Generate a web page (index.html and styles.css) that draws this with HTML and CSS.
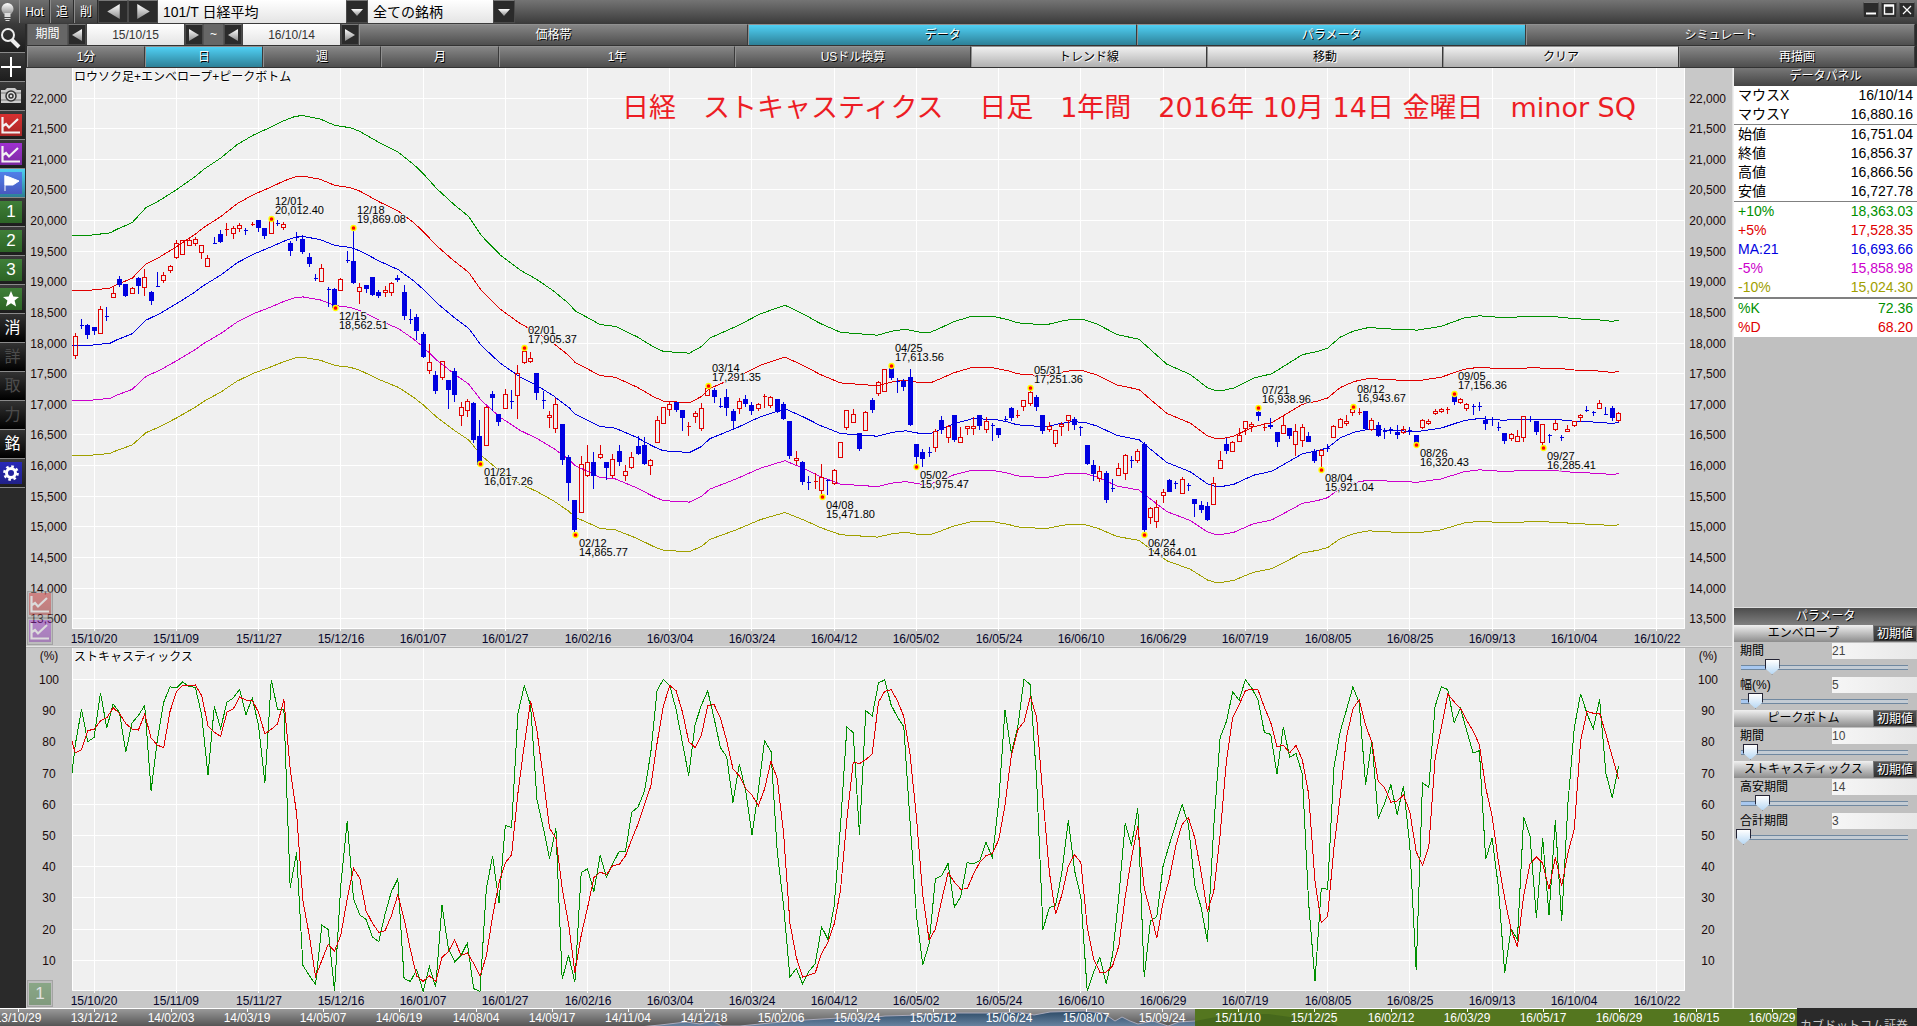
FILE: index.html
```html
<!DOCTYPE html>
<html lang="ja">
<head>
<meta charset="utf-8">
<title>日経平均 チャート</title>
<link rel="stylesheet" href="styles.css">
</head>
<body>
<svg class="defs" aria-hidden="true">
  <linearGradient id="silver" x1="0" y1="0" x2="0" y2="1"><stop offset="0" stop-color="#fff"/><stop offset="1" stop-color="#8a8a8a"/></linearGradient>
  <linearGradient id="night" x1="0" y1="0" x2="0" y2="1"><stop offset="0" stop-color="#2c4a66"/><stop offset="1" stop-color="#6b86a3"/></linearGradient>
  <symbol id="left" viewBox="0 0 12 12"><path d="M11 0v12L1 6z" fill="url(#silver)"/></symbol>
  <symbol id="right" viewBox="0 0 12 12"><path d="M1 0v12L11 6z" fill="url(#silver)"/></symbol>
  <symbol id="down" viewBox="0 0 12 8"><path d="M0 1h12L6 8z" fill="url(#silver)"/></symbol>
  <symbol id="graph" viewBox="0 0 22 22"><path d="M2.500 3v15.500H20M3 12l3-2 3 3.500L18 5" fill="none" stroke="#f2f2f2" stroke-width="2.200"/></symbol>
</svg>
<div class="app">
  <header class="titlebar">
    <svg class="bulb" viewBox="0 0 18 23" aria-hidden="true"><circle cx="7" cy="9" r="6" fill="url(#silver)"/><path d="M4 13h6v4H4zM4 18h6v1H4zM5 20h4v1H5z" fill="#ddd"/></svg>
    <button class="grey hot">Hot</button><button class="grey mini">追</button><button class="grey mini">削</button>
    <button class="dark nav" aria-label="前へ"><svg width="15" height="15"><use href="#left"/></svg></button>
    <button class="dark nav" aria-label="次へ"><svg width="15" height="15"><use href="#right"/></svg></button>
    <label class="combo code"><select aria-label="銘柄"><option>101/T 日経平均</option></select><span class="dark"><svg width="12" height="8"><use href="#down"/></svg></span></label>
    <label class="combo list"><select aria-label="リスト"><option>全ての銘柄</option></select><span class="dark"><svg width="12" height="8"><use href="#down"/></svg></span></label>
    <div class="window">
      <button class="dark" aria-label="最小化"><svg width="14" height="14"><path d="M2 10.500h10" stroke="#fff" stroke-width="2"/></svg></button>
      <button class="dark" aria-label="最大化"><svg width="14" height="14"><path d="M2.500 2h9v9h-9zM2 3h10" fill="none" stroke="#fff" stroke-width="1.400"/></svg></button>
      <button class="dark" aria-label="閉じる"><svg width="14" height="14"><path d="M3 3l8 8M11 3l-8 8" stroke="#fff" stroke-width="1.200"/></svg></button>
    </div>
  </header>
  <div class="body">
    <nav class="tools">
      <button aria-label="拡大"><svg width="22" height="24" fill="none" stroke="#eee"><circle cx="8" cy="9" r="6" stroke-width="2"/><path d="M12 14l7 7" stroke-width="4"/></svg></button>
      <button aria-label="十字線"><svg width="22" height="22"><path d="M1 11h20M11 1v20" stroke="#fff" stroke-width="2"/></svg></button>
      <button aria-label="撮影"><svg width="22" height="20"><path d="M1 4h4l2-2h8l2 2h4v13H1z" fill="#ccc"/><path d="M1 7h20M1 14h20" stroke="#777"/><circle cx="11" cy="10" r="5" fill="#ddd" stroke="#333" stroke-width="1.500"/><circle cx="11" cy="10" r="2" fill="none" stroke="#333" stroke-width="1.500"/></svg></button>
      <button aria-label="チャート1"><svg class="tile red" width="22" height="22"><use href="#graph"/></svg></button>
      <button aria-label="チャート2"><svg class="tile purple" width="22" height="22"><use href="#graph"/></svg></button>
      <button class="on" aria-label="旗"><svg class="tile blue" width="22" height="22"><path d="M5 3v16M5 4l4 1 10 4-6 4H5z" fill="#fff" stroke="#fff"/></svg></button>
      <button><span class="tile green">1</span></button>
      <button><span class="tile green">2</span></button>
      <button><span class="tile green">3</span></button>
      <button aria-label="お気に入り"><svg class="tile green" width="22" height="22"><path d="M11 3l2.300 5.500 5.700.4-4.400 3.700 1.500 5.900-5.100-3.300-5.100 3.300 1.500-5.900L3 8.900l5.700-.4z" fill="#fff"/></svg></button>
      <button class="word">消</button>
      <button class="word" disabled>詳</button>
      <button class="word" disabled>取</button>
      <button class="word" disabled>力</button>
      <button class="word">銘</button>
      <button aria-label="設定"><svg class="tile navy" width="22" height="22"><circle cx="11" cy="11" r="4.500" fill="none" stroke="#fff" stroke-width="3"/><circle cx="11" cy="11" r="6.600" fill="none" stroke="#fff" stroke-width="2.500" stroke-dasharray="2.600 2.584"/></svg></button>
    </nav>
    <main class="main">
      <div class="bar range">
        <span class="tag">期間</span>
        <button class="dark step" aria-label="開始日を戻す"><svg width="12" height="12"><use href="#left"/></svg></button>
        <input class="day" value="15/10/15" aria-label="開始日">
        <button class="dark step" aria-label="開始日を進める"><svg width="12" height="12"><use href="#right"/></svg></button>
        <span class="tag tilde">~</span>
        <button class="dark step" aria-label="終了日を戻す"><svg width="12" height="12"><use href="#left"/></svg></button>
        <input class="day" value="16/10/14" aria-label="終了日">
        <button class="dark step" aria-label="終了日を進める"><svg width="12" height="12"><use href="#right"/></svg></button>
        <button class="tab">価格帯</button><button class="tab active">データ</button><button class="tab active">パラメータ</button><button class="tab">シミュレート</button>
      </div>
      <div class="bar spans">
        <button class="tab">1分</button><button class="tab active">日</button><button class="tab">週</button><button class="tab">月</button>
        <button class="tab wide">1年</button><button class="tab wide">USドル換算</button><button class="tab wide light">トレンド線</button><button class="tab wide light">移動</button><button class="tab wide light">クリア</button><button class="tab wide">再描画</button>
      </div>
      <div class="work">
        <div class="charts">
          <section class="pane price"><svg id="price" role="img" aria-label="ロウソク足"></svg>
            <div class="float"><button aria-label="チャート1"><svg class="tile red" width="22" height="22"><use href="#graph"/></svg></button><button aria-label="チャート2"><svg class="tile purple" width="22" height="22"><use href="#graph"/></svg></button></div>
          </section>
          <section class="pane stoch"><svg id="stoch" role="img" aria-label="ストキャスティックス"></svg>
            <div class="float"><button><span class="tile green">1</span></button></div>
          </section>
        </div>
        <aside class="side">
          <section>
            <h2>データパネル</h2>
            <table class="data">
              <tbody><tr><th>マウスX</th><td>16/10/14</td></tr><tr><th>マウスY</th><td>16,880.16</td></tr></tbody>
              <tbody><tr><th>始値</th><td>16,751.04</td></tr><tr><th>終値</th><td>16,856.37</td></tr><tr><th>高値</th><td>16,866.56</td></tr><tr><th>安値</th><td>16,727.78</td></tr></tbody>
              <tbody><tr class="c-green"><th>+10%</th><td>18,363.03</td></tr><tr class="c-red"><th>+5%</th><td>17,528.35</td></tr><tr class="c-blue"><th>MA:21</th><td>16,693.66</td></tr><tr class="c-pink"><th>-5%</th><td>15,858.98</td></tr><tr class="c-olive"><th>-10%</th><td>15,024.30</td></tr></tbody>
              <tbody class="thick"><tr class="c-green"><th>%K</th><td>72.36</td></tr><tr class="c-red"><th>%D</th><td>68.20</td></tr></tbody>
            </table>
          </section>
          <section class="params">
            <h2>パラメータ</h2>
            <div class="group"><h3>エンベロープ</h3><button>初期値</button></div>
            <div class="param"><label for="p1">期間</label><input class="num" value="21" aria-label="期間の値"><input id="p1" type="range" min="3" max="105" value="21" style="--fill:18%"></div>
            <div class="param"><label for="p2">幅(%)</label><input class="num" value="5" aria-label="幅の値"><input id="p2" type="range" min="1" max="55" value="5" style="--fill:8%"></div>
            <div class="group"><h3>ピークボトム</h3><button>初期値</button></div>
            <div class="param"><label for="p3">期間</label><input class="num" value="10" aria-label="期間の値"><input id="p3" type="range" min="5" max="121" value="10" style="--fill:5%"></div>
            <div class="group"><h3>ストキャスティックス</h3><button>初期値</button></div>
            <div class="param"><label for="p4">高安期間</label><input class="num" value="14" aria-label="高安期間の値"><input id="p4" type="range" min="2" max="104" value="14" style="--fill:12%"></div>
            <div class="param"><label for="p5">合計期間</label><input class="num" value="3" aria-label="合計期間の値"><input id="p5" type="range" min="3" max="100" value="3" style="--fill:0%"></div>
          </section>
        </aside>
      </div>
    </main>
  </div>
  <footer class="footer"><svg id="history" role="img" aria-label="全期間"></svg><div class="brand">カブドットコム証券</div></footer>
</div>
<script src="script.js"></script>
</body>
</html>
```

FILE: styles.css
```css
* { box-sizing: border-box; }
body { margin: 0; background: #2a2a2a; font: 12px/16px "Liberation Sans", "Noto Sans CJK JP", sans-serif; color: #000; }
button, input, select { font: inherit; margin: 0; padding: 0; border: 0; border-radius: 0; }
button { display: flex; align-items: center; justify-content: center; color: #fff; cursor: pointer; }
.defs { position: absolute; width: 0; height: 0; }
.app { display: flex; flex-direction: column; height: 100vh; min-height: 600px; overflow: hidden; }

.titlebar { display: flex; height: 24px; padding-bottom: 1px; background: linear-gradient(#747474, #3a3a3a); }
.bulb { width: 19px; height: 23px; }
.grey { background: linear-gradient(#6e6e6e, #404040); border-left: 1px solid #8c8c8c; border-right: 1px solid #2c2c2c; text-shadow: 1px 1px #000; }
.hot { width: 31px; }
.mini { width: 24px; }
.dark { background: #2b2b2b; border: 1px solid #4a4a4a; border-top-color: #777; }
.nav { width: 30px; }
.combo { display: flex; }
.combo select { flex: 1; appearance: none; padding-left: 5px; background: linear-gradient(#fff, #e4e4e4); color: #000; font-size: 14px; }
.combo .dark { display: flex; align-items: center; justify-content: center; width: 22px; }
.code { width: 210px; }
.list { width: 147px; }
.window { display: flex; gap: 2px; margin-left: auto; padding: 2px; }
.window button { width: 16px; height: 16px; }

.body { display: flex; flex: 1; min-height: 0; }
.tools { width: 26px; background: #2a2a2a; }
.tools button { width: 25px; height: 29px; background: linear-gradient(#3a3a3a, #1d1d1d); border-bottom: 1px solid #8a8a8a; justify-content: flex-start; }
.tools .word { font-size: 16px; justify-content: center; background: linear-gradient(#333, #000); }
.tools .word:disabled { color: #4c4c4c; }
.tools .on { background: linear-gradient(#4fcff2, #2d7f95); }
.tile { width: 22px; height: 22px; color: #fff; font-size: 17px; line-height: 22px; text-align: center; }
.red { background: linear-gradient(#d83030, #a82828); }
.purple { background: linear-gradient(#a030d0, #7a2aa0); }
.blue { background: linear-gradient(#5080e8, #4858c0); }
.green { background: linear-gradient(#3f7f38, #2c6425); }
.navy { background: linear-gradient(#2828b8, #202088); }

.main { display: flex; flex: 1; flex-direction: column; min-width: 0; }
.bar { display: flex; height: 22px; border-bottom: 1px solid #333; background: #2b2b2b; padding: 0 2px 0 1px; }
.spans { display: grid; grid-template-columns: repeat(16, 1fr); }
.tag { width: 41px; background: #666; color: #fff; line-height: 21px; text-align: center; border: 1px solid #555; border-width: 0 1px; }
.tilde { width: 21px; }
.step { width: 18px; }
.day { width: 99px; height: 21px; border: solid #444; border-width: 0 1px; background: linear-gradient(#fff, #e4e4e4); color: #333; text-align: center; }
.tab { flex: 1 1 0; background: linear-gradient(#868686, #4e4e4e); border: solid #909090; border-width: 1px 1px 0 1px; border-right-color: #3a3a3a; text-shadow: 1px 1px #000; }
.wide { grid-column: span 2; }
.active { background: linear-gradient(#50d0f4, #2d8097); }
.light { background: linear-gradient(#f0f0f0, #b0b0b0); color: #000; text-shadow: 1px 1px #fff; }

.work { display: flex; flex: 1; min-height: 0; }
.charts { display: flex; flex: 1; flex-direction: column; min-width: 0; border-right: 1px solid #e0e0e0; background: #c8c8c8; }
.pane { position: relative; min-height: 0; }
.price { flex: 579 1 0; border-bottom: 1px solid #e4e4e4; }
.stoch { flex: 361 1 0; border-top: 1px solid #b4b4b4; }
.pane > svg { display: block; width: 100%; height: 100%; }
.float { position: absolute; left: 1px; bottom: 1px; opacity: .45; }
.float button { width: 26px; height: 27px; background: #b0b0b0; border: 1px solid #777; }

text { font-size: 12px; }
.peak { font-size: 11px; paint-order: stroke; stroke: #f0f0f0; stroke-width: 2px; }
.headline { font: 27px "DejaVu Sans", "Noto Sans CJK JP", sans-serif; fill: #ed1c24; }
.grid { fill: none; stroke: #fff; }
.axis { fill: #1a0a0a; }
.dates { fill: #05052a; text-anchor: middle; }
.line { fill: none; stroke-width: 1; shape-rendering: crispEdges; }
.up { fill: none; stroke: #e00000; shape-rendering: crispEdges; }
.down { fill: #0000e0; stroke: #0000e0; shape-rendering: crispEdges; }
.caption { paint-order: stroke; stroke: #fff; stroke-width: 1px; }

.side { display: flex; flex-direction: column; justify-content: space-between; width: 184px; border-left: 1px solid #f0f0f0; background: #c0c0c0; }
h2, h3 { margin: 0; font-size: 12px; font-weight: normal; text-align: center; line-height: 17px; }
h2 { background: linear-gradient(#4c4c4c, #808080); color: #fff; text-shadow: 1px 1px #000; }
.side section:first-child h2 { height: 18px; background: linear-gradient(#777, #444); }
.data { width: 100%; border-collapse: collapse; background: #fff; font-size: 14px; line-height: 19px; }
.data th, .data td { padding: 0 4px; font-weight: normal; text-align: left; height: 19px; }
.data td { text-align: right; }
.data tbody + tbody { border-top: 1px solid #808080; }
.data .thick { border-top: 2px solid #808080; }
.c-green { color: #009000; }
.c-red { color: #e00000; }
.c-blue { color: #0000e0; }
.c-pink { color: #cc00cc; }
.c-olive { color: #a0a000; }
.params { flex-basis: 401px; border-top: 1px solid #ddd; }
.group { display: flex; height: 17px; }
.group h3 { flex: 1; background: linear-gradient(#f0f0f0, #8c8c8c); }
.group button { width: 44px; background: linear-gradient(#555, #333); border: 1px solid #777; text-shadow: 1px 1px #000; }
.param { display: grid; grid-template-columns: 98px 1fr; grid-template-rows: 17px 17px; }
.param label { padding: 1px 0 0 6px; }
.num { width: 100%; height: 16px; margin-top: 1px; background: linear-gradient(90deg, #f6f6f6, #e8e8e8); color: #444; }
input[type=range] { grid-column: 1 / 3; appearance: none; height: 16px; margin: 0 4px 0 2px; background: linear-gradient(90deg, #a8c8f0 var(--fill), #c4ccd4 0) content-box; padding: 6px 5px; }
input[type=range]::-webkit-slider-runnable-track { height: 5px; margin: 0 -5px; border: 0; background: linear-gradient(#7088a0, #7088a0) 5px 0 / calc(100% - 10px) 1px no-repeat, linear-gradient(#7088a0, #7088a0) 5px 4px / calc(100% - 10px) 1px no-repeat; }
input[type=range]::-webkit-slider-thumb { appearance: none; width: 15px; height: 16px; margin-top: -6px; background: linear-gradient(#fff, #b8d8f4); clip-path: polygon(0 0, 100% 0, 100% 60%, 50% 100%, 0 60%); border: 1px solid #223; }

.footer { display: flex; height: 18px; }
#history { flex: 1; height: 18px; background: linear-gradient(#999, #555); border-top: 1px solid #fff; }
.brand { width: 120px; padding: 10px 3px 0; overflow: hidden; white-space: nowrap; background: #2a2a2a; color: #c8c8c8; }
```

FILE: script.js
```js
// Daily rows: direction, high, low, body top, body bottom.
// Levels are chart steps: 22,000 yen is level 22 and 500 yen are 91.9 steps, counted downwards.
const CANDLES = [
  { base: 0, rows: `r 726 803 738 794;b 684 714 703 703;b 698 743 705 731;b 708 731 711 719;r 645 728 655 728;b 648 690 676 676;r 586 620 607 620;b 555 587 567 581;b 580 617 580 614;r 586 608 592 608;b 558 608 564 584;r 534 614 559 590;b 598 641 606 629;b 543 587 586 586;r 543 574 553 569;r 520 545 526 539;r 447 502 457 499;r 447 491 450 490;r 439 464 448 464;r 437 464 445 458;r 463 503 463 485;r 490 526 502 526;b 438 458 457 457;b 417 456 432 453;r 396 434 416 416;r 405 443 412 428;r 396 422 403 412;b 410 431 418 418;r 391 404 402 402;b 390 422 390 410;b 414 444 414 434;r 388 428 388 428;b 386 404 398 398;r 393 416 400 410;b 450 495 459 480;b 423 449 441 441;b 432 488 447 482;b 486 527 501 518;b 548 570 562 562;r 519 572 532 572;b 588 648 595 595;b 590 655 597 651;r 560 599 565 599;b 480 515 508 508;b 418 579 513 576;r 576 638 589 601;b 582 606 585 594;b 558 614 561 611;b 597 621 606 614;r 585 617 598 604;r 573 614 577 604;b 552 573 562 566;b 582 686 606 674;b 654 699 685 685;b 669 746 681 719;b 723 801 732 798;r 759 849 814 838;b 840 909 855 900;r 808 867 811 859;b 867 954 870 896;b 831 933 843 911;r 933 1005 949 973;r 924 978 931 958;b 933 1056 937 1047;b 987 1124 1038 1122;r 943 1064 949 1064;b 900 958 912 920;b 969 1005 972 992;r 894 952 910 952;b 897 954 931 931;r 822 984 847 913;r 777 818 781 814;r 781 815 802 811;b 846 927 849 906` },
  { base: 630, rows: `b 270 323 299 299;r 330 380 343 349;r 291 395 310 382;b 369 492 372 476;b 462 599 471 545;b 597 706 600 687;r 465 636 490 634;r 430 528 484 524;b 452 563 486 524;r 432 472 460 469;b 483 536 486 500;r 459 530 475 524;b 430 494 453 482;r 492 539 511 524;r 453 502 469 499;b 405 461 438 458;b 408 491 435 489;r 474 521 478 494;r 343 426 358 424;r 317 368 320 367;r 303 344 310 325;b 303 332 306 326;b 327 390 330 350;r 363 404 377 377;r 330 366 337 346;r 306 390 322 382;r 259 284 262 284;b 259 305 270 288;b 291 320 316 316;b 264 345 291 320;b 324 384 333 360;r 291 338 301 322;b 282 318 297 308;b 303 341 315 330;r 306 330 310 322;r 279 320 288 288;r 285 320 291 314;b 294 335 297 332;b 303 357 312 354;b 360 473 363 465;r 450 490 472 479;b 480 551 486 542;b 525 567 544 544;r 516 564 542 542;r 489 594 529 569;b 534 582 538 538;r 502 551 508 548;r 421 470 424 470;r 328 385 328 380;r 324 366 340 364;b 396 449 399 443;r 328 388 334 388;b 291 335 300 327;r 240 285 244 278;r 205 272 205 271;b 198 236 201 231;b 231 275 242 242;b 234 269 243 258;b 204 375 231 372;b 430 502 430 467;b 444 498 456 473;b 438 467 454 454;r 384 452 391 440;b 345 398 360 386;r 372 425 376 410;b 345 422 345 416;r 378 425 409 425;r 375 402 376 382;r 348 402 376 382;b 340 386 345 374;r 348 395 361 386;b 366 419 373 373;b 381 410 384 401;b 345 362 355 355;b 318 359 324 350;r 327 349 345 345;r 298 330 298 317;r 268 315 276 307;b 282 330 291 317;b 342 399 345 389;r 363 392 377 385;r 388 437 388 428;r 363 404 370 376;r 343 389 343 360;b 348 386 357 371;b 375 404 380 380;b 432 491 435 489;b 477 539 495 518;r 495 542 511 532;b 510 606 519 596;b 534 572 563 563;r 486 524 502 524;r 457 536 463 517;b 465 500 480 480;r 444 485 451 479;b 423 705 430 687;r 618 668 622 650;r 595 680 619 661;r 562 605 574 583;b 534 573 540 572;b 538 563 549 549;r 528 578 535 578;b 546 570 554 554;b 597 648 597 609;b 600 635 615 626;b 603 659 618 657;r 528 611 547 611;r 450 502 478 502;b 411 458 432 449;r 420 452 424 452;r 381 422 403 421;r 361 401 361 383;r 363 392 370 376;b 330 359 336 345;r 366 390 379 379;b 350 384 374 378;b 396 437 396 422;r 343 398 373 398;b 381 413 384 404;r 369 465 391 430;r 369 437 379 419;b 393 422 408 422;b 444 486 451 480;r 444 512 448 463;b 429 452 444 444;r 372 411 376 409;r 351 380 355 379;r 342 375 361 367;r 324 345 327 335;r 320 341 335 335;b 330 386 333 383;r 351 388 358 385;b 363 407 375 404;b 381 413 391 391;b 378 398 386 386;b 372 413 394 401;r 375 397 385 394;b 378 401 389 389;b 402 434 405 428;r 354 383 358 380;r 354 372 361 367;r 324 342 331 337;r 321 335 325 331;r 318 339 327 327;b 285 311 287 302;r 291 309 295 304;r 306 329 310 322;b 308 342 316 316;b 303 330 316 316;b 345 386 359 368;b 348 374 357 357;b 363 389 380 380;b 396 428 399 419;r 396 419 401 412;r 385 422 406 421;r 343 422 346 409;b 345 362 356 356;b 363 402 363 392;r 370 446 370 425;b 399 425 405 405;r 355 389 367 385;b 402 419 410 410;r 372 393 385 391;r 358 376 361 373;r 339 362 343 349;b 315 332 328 328;b 330 344 335 335;r 297 324 307 322;b 318 341 340 340;b 315 359 324 350;r 333 362 337 358` },
].flatMap(({ base, rows }) => rows.split(';').map(r => {
  const [dir, ...v] = r.split(' ');
  return { dir, v: v.map(n => +n + base) };
}));

// 21-day average: day index, level (same steps as above).
const MA = [[-0.5,766],[2,766],[5.5,759],[6.6,749],[9,731],[11.2,690],[13.4,670],[16,641],[19,605],[20.3,586],[23,555],[25.6,518],[28.2,492],[31,470],[33,453],[34.8,441],[36,439],[38.7,448],[41.1,466],[43.5,472],[45,482],[48.2,514],[51.1,539],[53.5,572],[55,597],[57.2,639],[59.8,680],[62.2,714],[64.2,766],[67.2,819],[70.4,861],[73,886],[75.6,917],[78,951],[79,971],[83,1009],[85.4,1014],[88.8,1042],[91.5,1070],[93,1082],[97.1,1087],[99.1,1068],[100.3,1046],[104.6,1013],[108.3,980],[112.2,956],[115.2,981],[117.8,1006],[121,1030],[126.8,1038],[129.4,1026],[131.3,1022],[133.6,1030],[135.2,1030],[136.8,1018],[138.9,1001],[141.8,986],[145.2,987],[147.6,996],[148.9,1004],[153.4,1010],[155.8,1000],[157.4,995],[159.5,996],[161.6,1008],[164.7,1036],[168.2,1049],[170.5,1085],[172.6,1117],[176.3,1145],[179,1181],[180.3,1189],[181.3,1189],[183.2,1182],[186.3,1155],[189.2,1143],[194,1091],[196.4,1082],[198,1073],[200,1043],[202.2,1026],[204.5,1017],[208,1021],[212.2,1024],[215.9,1014],[219.6,991],[222,985],[225.6,990],[230,987],[234.3,988],[237,993],[240.7,996],[243,1000],[244,997]];

// Raw %K per day: level 298 is 100 %, level 1237 is 0 %.
const K = [497,390,487,474,340,446,373,399,518,430,408,378,635,480,368,322,325,307,321,323,407,587,381,447,368,355,330,405,355,440,611,300,391,389,927,820,1160,1190,1217,1039,1052,1236,918,726,960,1008,1022,1075,1088,1005,938,900,1200,1208,1173,1238,1164,1226,979,1110,1149,1130,1093,1230,1238,930,831,972,738,746,402,318,378,660,745,838,748,1202,1130,1211,880,870,
  938,829,895,853,817,816,699,683,635,520,332,300,319,390,490,589,435,377,334,415,505,532,670,554,635,768,635,484,516,820,980,1195,1169,1216,1178,1155,1044,1081,980,740,442,460,766,394,409,310,301,377,413,442,730,1010,1158,1095,900,890,853,985,953,851,854,845,790,835,670,391,520,445,298,316,600,1052,986,980,880,724,875,955,1237,1180,1135,1216,1130,950,733,799,688,1195,1026,1013,
  860,795,735,676,735,920,985,1088,740,475,426,337,362,301,325,362,459,465,584,442,534,522,584,970,1208,927,931,565,455,390,322,370,616,483,718,673,617,706,619,800,1175,610,625,380,322,330,430,386,455,521,514,841,777,925,1183,1050,1082,713,770,1018,778,1009,724,1027,670,445,343,402,448,359,582,655,559];

const PEAKS = [[31,'12/01','20,012.40',1],[41,'12/15','18,562.51',0],[44,'12/18','19,869.08',1],[64,'01/21','16,017.26',0],[71,'02/01','17,905.37',1],[79,'02/12','14,865.77',0],[100,'03/14','17,291.35',1],[118,'04/08','15,471.80',0],[129,'04/25','17,613.56',1],[133,'05/02','15,975.47',0],[151,'05/31','17,251.36',1],[169,'06/24','14,864.01',0],[187,'07/21','16,938.96',1],[197,'08/04','15,921.04',0],[202,'08/12','16,943.67',1],[212,'08/26','16,320.43',0],[218,'09/05','17,156.36',1],[232,'09/27','16,285.41',0]];
const DAYS = '15/10/20 15/11/09 15/11/27 15/12/16 16/01/07 16/01/27 16/02/16 16/03/04 16/03/24 16/04/12 16/05/02 16/05/24 16/06/10 16/06/29 16/07/19 16/08/05 16/08/25 16/09/13 16/10/04 16/10/22'.split(' ');
const MONTHS = '13/10/29 13/12/12 14/02/03 14/03/19 14/05/07 14/06/19 14/08/04 14/09/17 14/11/04 14/12/18 15/02/06 15/03/24 15/05/12 15/06/24 15/08/07 15/09/24 15/11/10 15/12/25 16/02/12 16/03/29 16/05/17 16/06/29 16/08/15 16/09/29'.split(' ');

const LEFT = 46, RIGHT = 47, FOOT = 17, BARS = 255;
const text = (x, y, s, cls, extra = '') => `<text x="${x}" y="${y}" class="${cls}" ${extra}>${s}</text>`;
const poly = (pts, color) => `<polyline class="line" stroke="${color}" points="${pts.map(p => p[0].toFixed(1) + ',' + p[1].toFixed(1)).join(' ')}"/>`;

// Plot background, gridlines and date labels; returns scales too.
function frame(svg, ticks, yOf) {
  const w = svg.clientWidth, h = svg.clientHeight, pw = w - LEFT - RIGHT, ph = h - FOOT;
  const x = i => LEFT + (i + 0.5) * pw / BARS;
  let s = `<rect x="${LEFT}" y="0" width="${pw}" height="${ph}" fill="#f0f0f0"/><path class="grid" d="M${LEFT + .5} 0V${ph - .5}H${LEFT + pw - .5}V0`;
  ticks.forEach(t => { s += `M${LEFT} ${Math.round(yOf(t, ph)) + .5}h${pw}`; });
  DAYS.forEach((d, n) => { s += `M${Math.floor(x(3 + 13 * n)) + .5} 0V${ph + 2}`; });
  s += '"/>';
  DAYS.forEach((d, n) => { s += text(Math.round(x(3 + 13 * n)), h - 3, d, 'dates'); });
  return { w, h, pw, ph, x, s };
}

function drawPrice() {
  const svg = document.getElementById('price');
  const level = (v, ph) => (29.5 + (v - 22) / 3) * ph / 561;
  const ofYen = (p, ph) => level(22 + (22000 - p) / 500 * 91.9, ph);
  const ticks = Array.from({ length: 18 }, (_, i) => 22000 - 500 * i);
  const f = frame(svg, ticks, ofYen);
  let s = f.s;
  ticks.forEach(t => {
    const y = Math.round(ofYen(t, f.ph)) + 5, label = t.toLocaleString('en-US');
    s += text(LEFT - 5, y, label, 'axis', 'text-anchor="end"') + text(f.w - 6, y, label, 'axis', 'text-anchor="end"');
  });
  const yen = v => 22000 - (v - 22) / 91.9 * 500;
  [[1.1, '#009000'], [1.05, '#e00000'], [1, '#0000e0'], [.95, '#cc00cc'], [.9, '#a0a000']].forEach(([m, c]) => {
    s += poly(MA.map(([i, v]) => [f.x(i), ofYen(yen(v) * m, f.ph)]), c);
  });
  CANDLES.forEach((c, i) => {
    const x = Math.floor(f.x(i)) + .5;
    const [hi, lo, top, bot] = c.v.map(v => Math.round(level(v, f.ph)) + .5);
    const cls = c.dir === 'r' ? 'up' : 'down';
    s += `<path class="${cls}" d="M${x} ${hi}V${top}M${x} ${bot}V${lo}M${x - 2} ${top}h4V${bot}h-4z"/>`;
  });
  PEAKS.forEach(([i, day, price, high]) => {
    const x = Math.round(f.x(i)), y = Math.round(ofYen(+price.replace(',', ''), f.ph)), b = high ? y - 14 : y + 12;
    s += `<circle cx="${x + .5}" cy="${y}" r="2.500" fill="#f00" stroke="#ff0" stroke-width="1.300"/>` + text(x + 4, b, day, 'peak') + text(x + 4, b + 9, price, 'peak');
  });
  s += text(LEFT + 2, 13, 'ロウソク足+エンベロープ+ピークボトム', 'caption');
  s += text(LEFT + Math.round(f.pw * .341), 49, '日経　ストキャスティクス　 日足　1年間　2016年 10月 14日 金曜日　minor SQ', 'headline');
  svg.innerHTML = s;
}

function drawStoch() {
  const svg = document.getElementById('stoch');
  const of = (p, ph) => ph - (p / 100) * ph * 313 / 344;
  const ticks = [10, 20, 30, 40, 50, 60, 70, 80, 90, 100];
  const f = frame(svg, ticks, of);
  let s = f.s;
  const both = (y, t) => text(23, y, t, 'axis', 'text-anchor="middle"') + text(f.w - 24, y, t, 'axis', 'text-anchor="middle"');
  s += both(12, '(%)');
  ticks.forEach(t => { s += both(Math.round(of(t, f.ph)) + 5, t); });
  const pct = v => (1237 - v) / 9.39;
  // %D weighs the last three days by their 14-day high-low span.
  const span = K.map((_, i) => {
    const win = CANDLES.slice(Math.max(0, i - 13), i + 1);
    return Math.max(...win.map(c => c.v[1])) - Math.min(...win.map(c => c.v[0]));
  });
  const D = K.map((_, i) => {
    if (i < 2) return [521, 511][i];
    let n = 0, d = 0;
    for (let j = i - 2; j <= i; j++) { n += K[j] * span[j]; d += span[j]; }
    return n / d;
  });
  s += poly([[-.5, 582], ...K.map((v, i) => [i, v])].map(([i, v]) => [f.x(i), of(pct(v), f.ph)]), '#009000');
  s += poly([[-.5, 484], ...D.map((v, i) => [i, v])].map(([i, v]) => [f.x(i), of(pct(v), f.ph)]), '#e00000');
  s += text(LEFT + 2, 13, 'ストキャスティックス', 'caption');
  svg.innerHTML = s;
}

function drawHistory() {
  const svg = document.getElementById('history'), k = svg.clientWidth / 1797, cut = 1195 * k;
  const area = [[639,18],[660,16],[686,13],[700,15],[712,12],[722,17],[740,17],[770,14],[805,11],[839,9],[860,10],[885,7],[920,6],[958,4],[992,4],[1019,3],[1034,6],[1050,3],[1084,2],[1103,4],[1115,12],[1122,8],[1130,12],[1138,15],[1153,12],[1168,17],[1179,13],[1195,12]];
  const late = [[1195,12],[1216,8],[1238,5],[1268,5],[1290,8],[1309,9],[1327,13],[1338,17]];
  const path = a => 'M' + a.map(([x, y]) => (x * k).toFixed(1) + ' ' + y).join('L');
  let s = `<path d="${path(area)}V18H${639 * k}z" fill="url(#night)"/><path d="${path(area)}" fill="none" stroke="#aab"/>`;
  s += `<rect x="${cut}" y="0" width="${svg.clientWidth - cut}" height="18" fill="#54761f"/><path d="${path(late)}V18H${cut}z" fill="#46681c"/>`;
  MONTHS.forEach((m, i) => {
    const x = Math.round((18 + 76.25 * i) * k);
    s += `<path d="M${x + .5} 0v3" stroke="#fff"/>` + text(x, 13, m, '', 'text-anchor="middle" fill="#fff"');
  });
  svg.innerHTML = s;
}

function draw() { drawPrice(); drawStoch(); drawHistory(); }
draw();
window.addEventListener('resize', draw);
```
